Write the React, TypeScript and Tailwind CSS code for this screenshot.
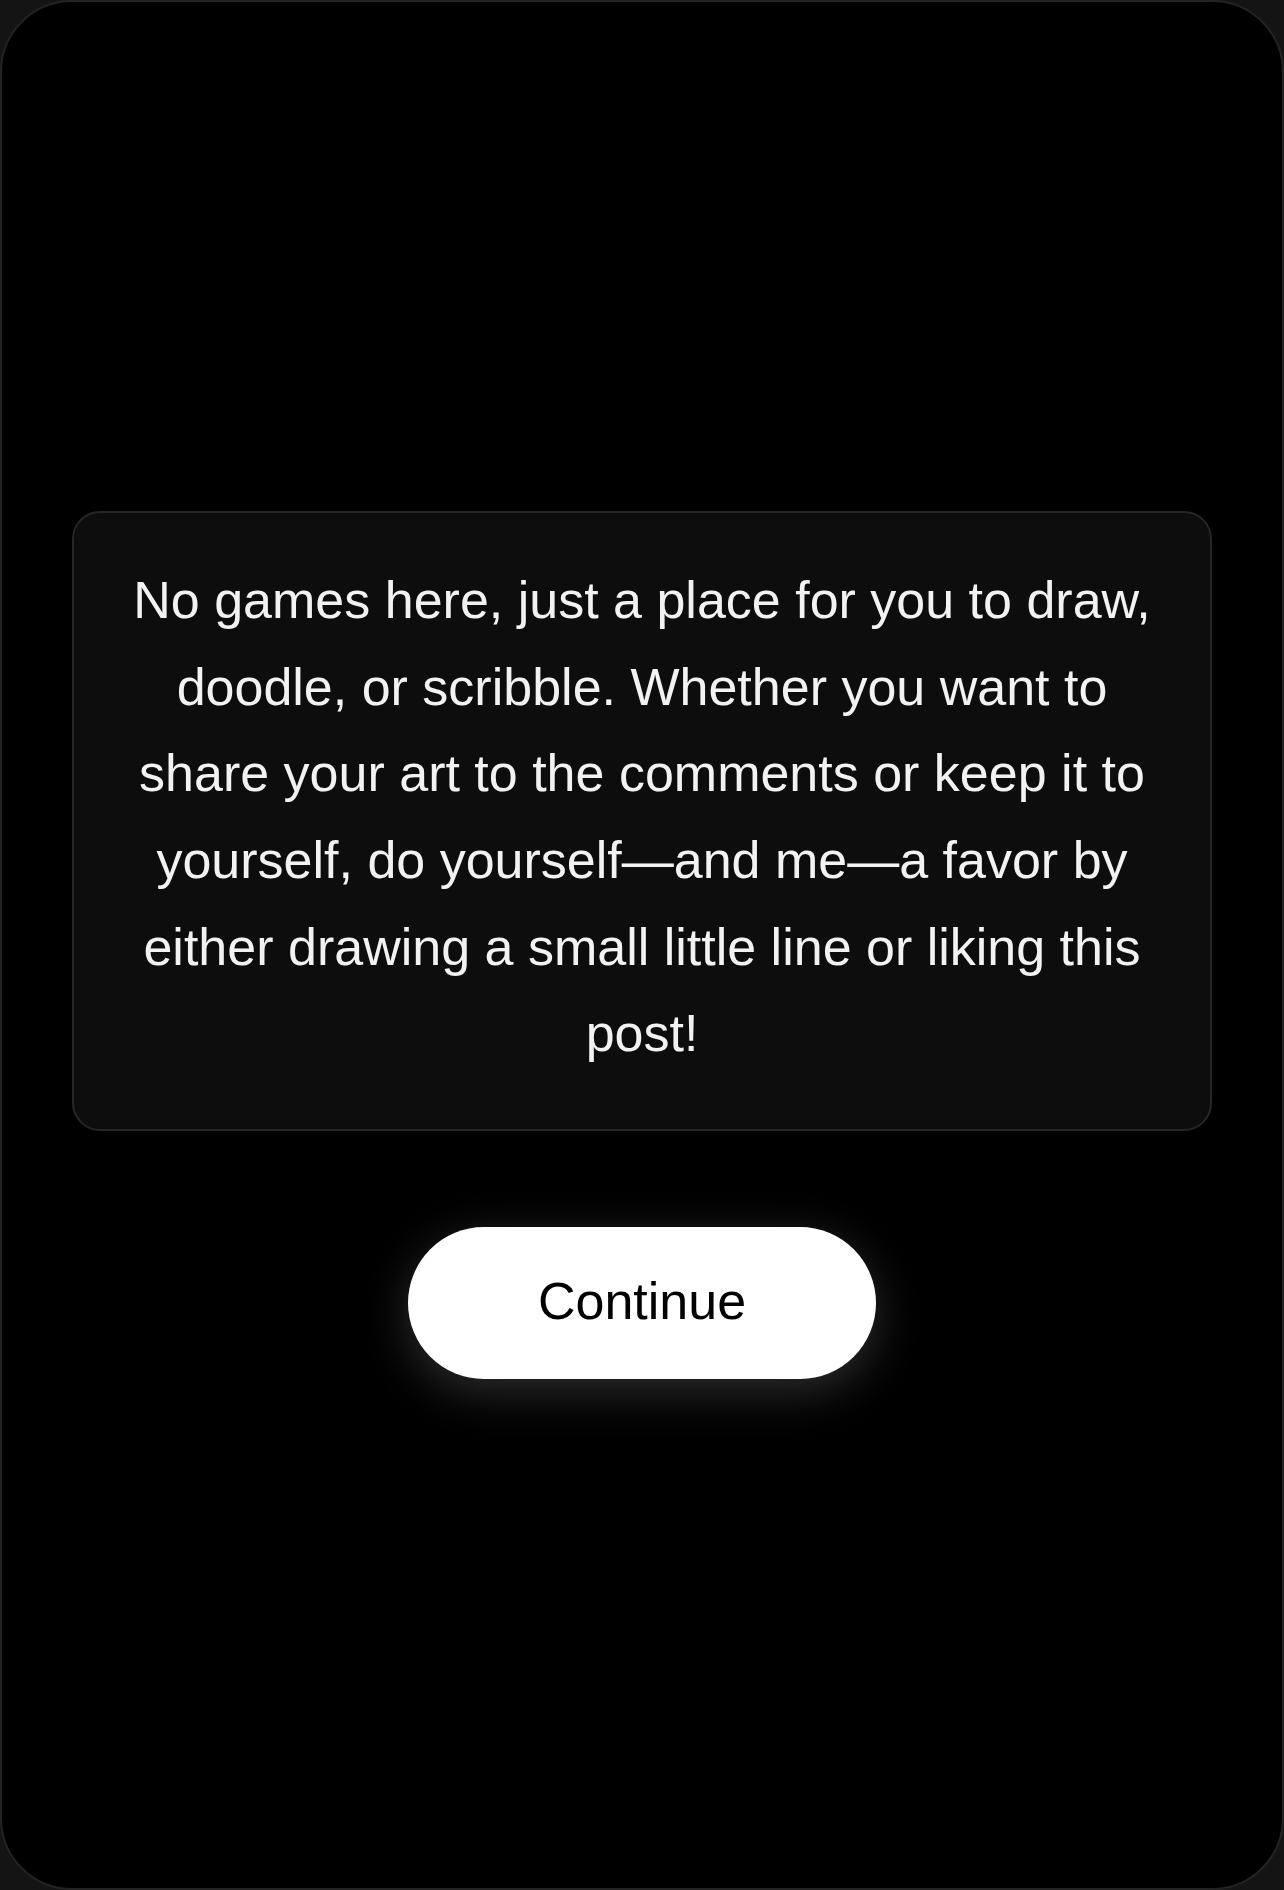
import React from 'react';

export default function App() {
  return (
    <div className="h-[1890px] w-full bg-[#141414]">
      {/* Device frame */}
      <div className="flex h-full w-full flex-col items-center justify-center rounded-[72px] border-2 border-[#232323] bg-black px-[70px] font-['Liberation_Sans',Arial,sans-serif]">
        {/* Message card */}
        <div className="w-full rounded-[28px] border-2 border-[#262626] bg-[#0d0d0d] px-12 pt-11 pb-[52px] text-center">
          <p className="text-[52px] leading-[1.666] text-[#f2f2f2]">
            No games here, just a place for you to draw, doodle, or scribble. Whether you want to share your art to the
            comments or keep it to yourself, do yourself—and me—a favor by either drawing a small little line or liking
            this post!
          </p>
        </div>

        {/* Action */}
        <button className="mt-24 flex h-[152px] w-[468px] items-center justify-center rounded-full bg-white pb-1 text-[52px] text-black shadow-[0_12px_48px_rgba(255,255,255,0.18)]">
          Continue
        </button>
      </div>
    </div>
  );
}
